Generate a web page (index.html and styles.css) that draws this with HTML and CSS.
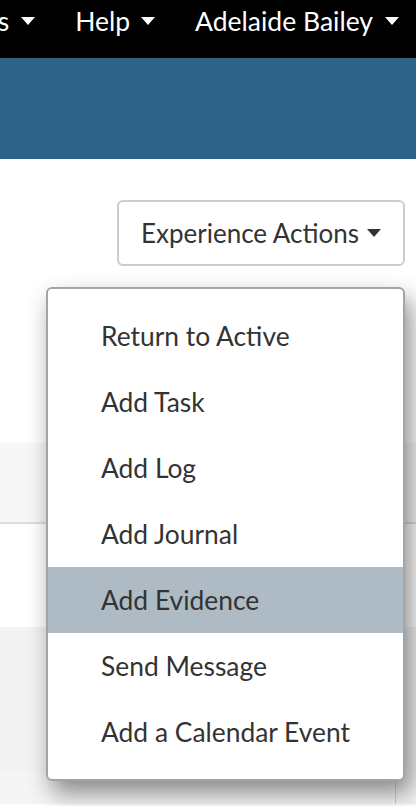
FILE: index.html
```html
<!DOCTYPE html>
<html lang="en">
<head>
<meta charset="utf-8">
<title>Experience</title>
<link rel="stylesheet" href="styles.css">
</head>
<body>
<nav class="topnav">
  <ul class="nav-list">
    <li class="nav-item">Resources <span class="caret"></span></li>
    <li class="nav-item">Help <span class="caret"></span></li>
    <li class="nav-item">Adelaide Bailey <span class="caret"></span></li>
  </ul>
</nav>
<header class="hero"></header>
<main class="content">
  <div class="actions-row">
    <div class="dropdown">
      <button class="btn-actions" type="button">Experience Actions <span class="caret dark"></span></button>
      <ul class="dropdown-menu">
        <li class="menu-item">Return to Active</li>
        <li class="menu-item">Add Task</li>
        <li class="menu-item">Add Log</li>
        <li class="menu-item">Add Journal</li>
        <li class="menu-item active">Add Evidence</li>
        <li class="menu-item">Send Message</li>
        <li class="menu-item">Add a Calendar Event</li>
      </ul>
    </div>
  </div>
  <div class="tabs-band"></div>
  <div class="panel"></div>
  <div class="lower">
    <div class="card"></div>
  </div>
</main>
</body>
</html>
```
FILE: styles.css
```css
* { box-sizing: border-box; }
html, body { margin: 0; padding: 0; }
body {
  font-family: Lato, "Noto Sans", "Liberation Sans", sans-serif;
  color: #333;
  background: #fff;
  width: 416px;
  height: 806px;
  overflow: hidden;
}
.topnav {
  height: 58px;
  background: #000;
  overflow: hidden;
  display: flex;
  justify-content: flex-end;
}
.nav-list {
  list-style: none;
  margin: 0;
  padding: 0 17px 0 0;
  display: flex;
  justify-content: flex-end;
  align-items: flex-start;
  gap: 40px;
  white-space: nowrap;
}
.nav-item {
  color: #fff;
  font-size: 26.5px;
  line-height: 42px;
  display: flex;
  align-items: center;
  gap: 12px;
}
.nav-item:nth-child(2) { gap: 11px; }
.caret {
  display: inline-block;
  width: 0;
  height: 0;
  border-left: 7px solid transparent;
  border-right: 7px solid transparent;
  border-top: 8px solid #fff;
}
.caret.dark { border-top-color: #333; }
.hero {
  height: 101px;
  background: #2e6287;
}
.content { position: relative; }
.actions-row {
  display: flex;
  justify-content: flex-end;
  padding: 41px 11px 0 0;
  height: 284px;
}
.dropdown { position: relative; }
.btn-actions {
  width: 288px;
  height: 66px;
  border: 2px solid #ccc;
  border-radius: 6px;
  background: #fff;
  color: #333;
  font-family: inherit;
  font-size: 26px;
  display: flex;
  align-items: center;
  justify-content: center;
  gap: 8px;
  padding: 0;
}
.dropdown-menu {
  position: absolute;
  top: 87px;
  right: 0;
  width: 359px;
  margin: 0;
  padding: 14px 0;
  list-style: none;
  background: #fff;
  border: 2px solid #a4a4a4;
  border-radius: 6px;
  box-shadow: 6px 12px 24px rgba(0, 0, 0, 0.45);
  z-index: 10;
}
.menu-item {
  height: 66px;
  padding-left: 53px;
  font-size: 26.4px;
  display: flex;
  align-items: center;
  color: #333;
  white-space: nowrap;
}
.menu-item.active { background: #aebac4; }
.tabs-band {
  height: 81px;
  background: #f7f7f7;
  border-bottom: 2px solid #dcdde0;
}
.panel {
  height: 103px;
  background: #fff;
}
.lower {
  height: 177px;
  background: #f3f3f3;
  padding: 146px 20px 0 0;
  overflow: hidden;
}
.card {
  height: 200px;
  border-right: 1px solid #d0d0d0;
  background: #f5f5f5;
}
```
